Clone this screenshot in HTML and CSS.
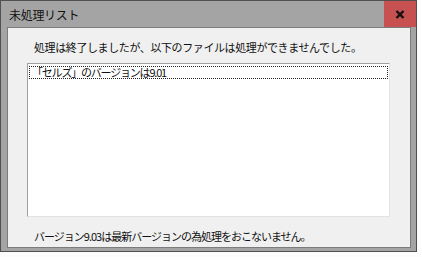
FILE: index.html
```html
<!DOCTYPE html>
<html lang="ja">
  <head>
    <meta charset="UTF-8" />
    <title>未処理リスト</title>
    <link rel="stylesheet" href="styles.css">
  </head>
  <body>
    <div class="window">
      <div class="titlebar">
        <span class="title">未処理リスト</span>
        <div class="close">
          <svg width="10" height="9" viewBox="0 0 10 9">
            <path d="M1.5 1 L8.5 8 M8.5 1 L1.5 8" stroke="#111" stroke-width="2.4" fill="none" />
          </svg>
        </div>
      </div>
      <div class="content">
        <p class="message">処理は終了しましたが、以下のファイルは処理ができませんでした。</p>
        <div class="listbox">
          <div class="item">「セルズ」のバージョンは9.01</div>
        </div>
        <p class="message footer">バージョン9.03は最新バージョンの為処理をおこないません。</p>
      </div>
    </div>
  </body>
</html>
```

FILE: styles.css
```css
body {
  margin: 0;
  background: #fdfdfd;
  font-family: "Noto Sans CJK JP", "Noto Sans", sans-serif;
  color: #111;
}

.window {
  width: 417px;
  height: 252px;
  box-sizing: border-box;
  border: 1px solid #505050;
  background: #a4a4a4;
  display: flex;
  flex-direction: column;
  padding: 0 5px 3px 6px;
}

.titlebar {
  height: 26px;
  display: flex;
  align-items: center;
  justify-content: space-between;
  margin-right: -5px;
}

.title {
  padding-left: 2px;
  font-size: 12px;
  letter-spacing: -0.3px;
}

.close {
  width: 32px;
  height: 26px;
  align-self: flex-start;
  background: #c75050;
  display: flex;
  align-items: center;
  justify-content: center;
}

.content {
  flex: 1;
  background: #f0f0f0;
  border: 1px solid #7c7c7c;
  display: flex;
  flex-direction: column;
  padding: 0 20px 0 19px;
}

.message {
  margin: 11px 0 0 7px;
  font-size: 11px;
  line-height: 16px;
  letter-spacing: -0.4px;
}

.listbox {
  margin-top: 8px;
  width: 361px;
  height: 150px;
  background: #fff;
  border: 1px solid #a0a0a0;
  border-right-color: #e3e3e3;
  border-bottom-color: #e3e3e3;
  padding: 2px 0 0 0;
}

.item {
  margin: 0 1px;
  height: 11px;
  border: 1px dotted #222;
  font-size: 11px;
  line-height: 11px;
  padding-left: 2px;
  letter-spacing: -1.2px;
}

.footer {
  margin-top: 11px;
  letter-spacing: -1px;
}
```
